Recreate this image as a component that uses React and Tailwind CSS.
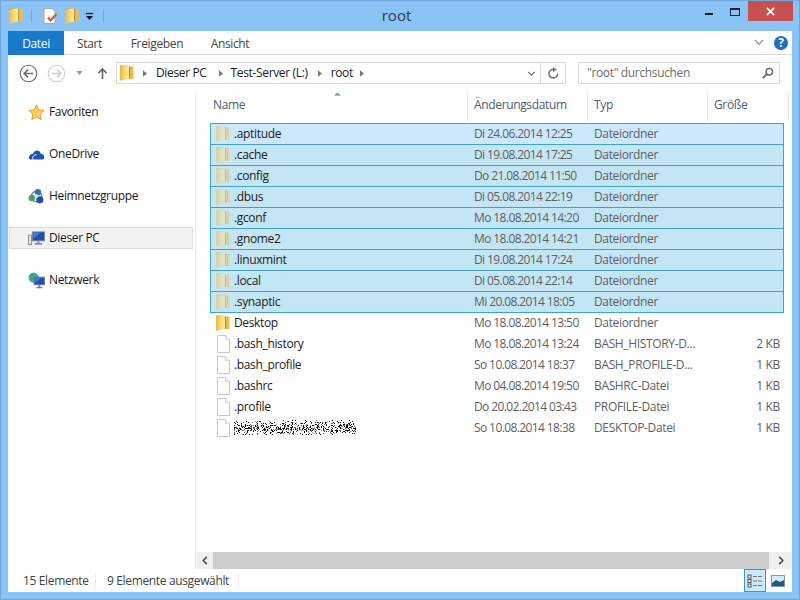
import React from "react";

const FONT = "font-['Open_Sans','Noto_Sans',sans-serif]";

function Folder({ faded = false, className = "" }) {
  return (
    <svg viewBox="0 0 16 16" className={`w-4 h-4 shrink-0 ${faded ? "opacity-45" : ""} ${className}`}>
      <defs>
        <linearGradient id="fg" x1="0" y1="0" x2="1" y2="0">
          <stop offset="0" stopColor="#eab93f" />
          <stop offset="0.5" stopColor="#f7d873" />
          <stop offset="1" stopColor="#fcecac" />
        </linearGradient>
        <linearGradient id="fb" x1="0" y1="0" x2="1" y2="0">
          <stop offset="0" stopColor="#d99f28" />
          <stop offset="1" stopColor="#efc04c" />
        </linearGradient>
      </defs>
      <path d="M1 0.5 H8 L10 1.5 H14.5 V14 H7 L1 15.5 Z" fill="url(#fb)" />
      <path d="M1 1.5 L10 0.5 V13.5 L1 15.5 Z" fill="url(#fg)" />
      <path d="M10 0.5 V13.5 L11 13 V1.5 Z" fill="#c18b25" />
    </svg>
  );
}

function PageIcon() {
  return (
    <svg viewBox="0 0 16 18" className="w-4 h-[18px] shrink-0">
      <path d="M2.5 0.5 H10.5 L14.5 4.5 V17.5 H2.5 Z" fill="#fff" stroke="#c8c8c8" />
      <path d="M10.5 0.5 V4.5 H14.5" fill="#f3f3f3" stroke="#d6d6d6" />
    </svg>
  );
}

function Noise() {
  const dots = [];
  let s = 12345;
  const r = () => {
    s = (s * 1103515245 + 12345) & 0x7fffffff;
    return s / 0x7fffffff;
  };
  for (let y = 0; y < 15; y++) {
    for (let x = 0; x < 122; x++) {
      const edge = Math.abs(y - 7.5) / 7.5;
      if (r() < 0.5 - edge * 0.4) {
        const v = r();
        const c = v < 0.6 ? "#111" : v < 0.85 ? "#666" : "#aaa";
        dots.push(<rect key={`${x}-${y}`} x={x} y={y} width="1" height="1" fill={c} />);
      }
    }
  }
  return (
    <svg viewBox="0 0 122 15" className="w-[122px] h-[15px] block">
      {dots}
    </svg>
  );
}

const selected = [
  [".aptitude", "Di 24.06.2014 12:25"],
  [".cache", "Di 19.08.2014 17:25"],
  [".config", "Do 21.08.2014 11:50"],
  [".dbus", "Di 05.08.2014 22:19"],
  [".gconf", "Mo 18.08.2014 14:20"],
  [".gnome2", "Mo 18.08.2014 14:21"],
  [".linuxmint", "Di 19.08.2014 17:24"],
  [".local", "Di 05.08.2014 22:14"],
  [".synaptic", "Mi 20.08.2014 18:05"],
];

const files = [
  [".bash_history", "Mo 18.08.2014 13:24", "BASH_HISTORY-D...", "2 KB"],
  [".bash_profile", "So 10.08.2014 18:37", "BASH_PROFILE-D...", "1 KB"],
  [".bashrc", "Mo 04.08.2014 19:50", "BASHRC-Datei", "1 KB"],
  [".profile", "Do 20.02.2014 03:43", "PROFILE-Datei", "1 KB"],
  [null, "So 10.08.2014 18:38", "DESKTOP-Datei", "1 KB"],
];

function Cells({ icon, name, date, type, size }) {
  return (
    <>
      <div className="w-[23px] flex justify-center items-center shrink-0">{icon}</div>
      <div className="w-[240px] truncate text-[#1a1a1a] shrink-0">{name}</div>
      <div className="w-[120px] text-[#5f5f5f] shrink-0 tracking-[-0.6px] whitespace-nowrap">{date}</div>
      <div className="w-[122px] text-[#5f5f5f] shrink-0 whitespace-nowrap">{type}</div>
      <div className="w-[64px] text-right text-[#5f5f5f] shrink-0">{size}</div>
    </>
  );
}

function NavItem({ icon, label, active = false }) {
  return (
    <div
      className={`h-[22px] ml-px mr-[2px] flex items-center pl-[18px] border ${
        active ? "bg-[#f2f2f2] border-[#dcdcdc]" : "border-transparent"
      }`}
    >
      <div className="w-[21px] flex items-center shrink-0">{icon}</div>
      <span className="text-[#1a1a1a]">{label}</span>
    </div>
  );
}

const Star = (
  <svg viewBox="0 0 18 18" className="w-[17px] h-[17px]">
    <path d="M9 1 L11.4 6.2 L17 6.9 L12.9 10.7 L14 16.4 L9 13.6 L4 16.4 L5.1 10.7 L1 6.9 L6.6 6.2 Z" fill="#fbcf5e" stroke="#e09a2c" />
  </svg>
);
const Cloud = (
  <svg viewBox="0 0 18 12" className="w-[17px] h-[11px]">
    <path d="M3 11.5 C0.5 11.5 0 9 1.5 7.6 C2 5.6 3.8 5 5 5.6 C6 2 9.5 0.5 12 2.5 C13 3.2 13.4 4.2 13.4 5.2 C16 5.2 17.6 7 17.6 9 C17.6 10.6 16.6 11.5 15 11.5 Z" fill="#1b58ab" />
    <path d="M5 11.5 C4.2 8 6.5 6 9 6.2" stroke="#fff" strokeWidth="1" fill="none" />
  </svg>
);
const Home = (
  <svg viewBox="0 0 18 18" className="w-[17px] h-[17px]">
    <circle cx="9" cy="9" r="5.5" fill="none" stroke="#5d86b8" strokeWidth="1.5" />
    <circle cx="10.5" cy="4.5" r="3.4" fill="#2f6fc0" />
    <circle cx="4" cy="10.5" r="3.4" fill="#4fa24a" />
    <circle cx="12.5" cy="12.5" r="3.8" fill="#1d4fa8" />
    <circle cx="9" cy="8.5" r="2" fill="#cfe3f5" />
  </svg>
);
const Pc = (
  <svg viewBox="0 0 18 16" className="w-[17px] h-[15px]">
    <rect x="0.5" y="4.5" width="3" height="10" fill="#e6e6e6" stroke="#8a8a8a" />
    <rect x="4.5" y="1" width="13" height="9.5" fill="#1c4fb0" stroke="#7b8794" />
    <path d="M5.5 2 H13 L5.5 8 Z" fill="#3f83d8" />
    <rect x="9.5" y="10.5" width="3" height="2.5" fill="#9aa5ad" />
    <rect x="7" y="13" width="8" height="1.5" fill="#6f7a82" />
  </svg>
);
const Net = (
  <svg viewBox="0 0 18 18" className="w-[17px] h-[17px]">
    <circle cx="6" cy="6" r="5.5" fill="#3fa4dc" />
    <path d="M2 3.5 L6 2 L8 5 L5 9 L2.5 7 Z" fill="#48a645" />
    <rect x="6.5" y="5.5" width="11" height="8" fill="#1c4fb0" stroke="#71808d" />
    <path d="M7.5 6.5 H14 L7.5 11 Z" fill="#3f83d8" />
    <rect x="11" y="13.5" width="2" height="2.5" fill="#7a8690" />
    <rect x="9" y="16" width="6" height="1.2" fill="#5d6a74" />
  </svg>
);

function Divider({ className = "" }) {
  return <div className={`w-px h-[14px] bg-[#5f9bd0] opacity-60 ${className}`} />;
}

function Crumb({ className }) {
  return (
    <svg viewBox="0 0 5 8" className={`w-[4px] h-[7px] fill-[#777] shrink-0 ${className}`}>
      <path d="M0 0 L5 4 L0 8 Z" />
    </svg>
  );
}

export default function App() {
  return (
    <div className={`w-[800px] h-[600px] bg-[#8bc3f6] border border-[#6ea7de] flex flex-col overflow-hidden text-[12px] tracking-[-0.35px] ${FONT}`}>
      {/* Title bar */}
      <div className="h-[30px] shrink-0 flex items-start relative">
        <div className="flex items-center pl-[7px] pt-[6px] h-[24px]">
          <Folder />
          <Divider className="ml-[7px]" />
          <svg viewBox="0 0 16 16" className="w-4 h-4 ml-[10px]">
            <path d="M2 0.5 H10 L13 3.5 V15.5 H2 Z" fill="#fff" stroke="#a8a8a8" />
            <path d="M6 9.5 L8.5 12.5 L14.5 6" fill="none" stroke="#e0562f" strokeWidth="2.2" />
          </svg>
          <Folder className="ml-[6px]" />
          <svg viewBox="0 0 10 10" className="w-[9px] h-[9px] ml-[5px]">
            <rect x="1" y="1" width="8" height="1.4" fill="#111" />
            <path d="M1 4.5 H9 L5 9 Z" fill="#111" />
          </svg>
          <Divider className="ml-[9px]" />
        </div>
        <div className="absolute left-0 right-[7px] top-[3px] text-center text-[15px] tracking-normal leading-[22px] text-[#2c3a4b]">root</div>
        <div className="ml-auto flex items-start mr-[6px]">
          <div className="w-[27px] h-[20px] flex justify-center">
            <div className="w-[8px] h-[2px] bg-[#10233a] mt-[12px]" />
          </div>
          <div className="w-[26px] h-[20px] flex justify-center">
            <div className="w-[10px] h-[8px] border border-t-2 border-[#10233a] mt-[7px]" />
          </div>
          <div className="w-[45px] h-[20px] bg-[#c75050] flex items-center justify-center">
            <svg viewBox="0 0 10 10" className="w-[9px] h-[9px]">
              <path d="M1 1 L9 9 M9 1 L1 9" stroke="#fff" strokeWidth="1.8" />
            </svg>
          </div>
        </div>
      </div>

      <div className="flex-1 mx-[7px] mb-[7px] bg-white flex flex-col min-h-0">
        {/* Tabs */}
        <div className="h-[24px] shrink-0 flex items-stretch border-b border-[#dadbdc] relative">
          <div className="w-[56px] -mb-px pt-[2px] bg-[#1979ca] text-white flex items-center justify-center">Datei</div>
          <div className="w-[51px] pt-[2px] flex items-center justify-center text-[#444]">Start</div>
          <div className="w-[84px] pt-[2px] flex items-center justify-center text-[#444]">Freigeben</div>
          <div className="w-[62px] pt-[2px] flex items-center justify-center text-[#444]">Ansicht</div>
          <div className="ml-auto flex items-center pr-[4px] gap-[10px]">
            <svg viewBox="0 0 12 8" className="w-[10px] h-[7px]">
              <path d="M1 1 L6 6 L11 1" fill="none" stroke="#9a9a9a" strokeWidth="1.8" />
            </svg>
            <div className="w-[14px] h-[14px] rounded-full bg-[#1a6fc0] text-white font-bold text-[12px] leading-[14px] text-center">?</div>
          </div>
        </div>

        {/* Address row */}
        <div className="h-[37px] shrink-0 flex items-start pt-[7px]">
          <div className="flex items-center w-[108px] h-[22px] shrink-0">
            <svg viewBox="0 0 20 20" className="w-[19px] h-[19px] ml-[11px]">
              <circle cx="10" cy="10" r="8.7" fill="#fff" stroke="#6f6f6f" strokeWidth="1.2" />
              <path d="M15 10 H6 M9.5 6 L5.5 10 L9.5 14" fill="none" stroke="#6f6f6f" strokeWidth="1.8" />
            </svg>
            <svg viewBox="0 0 20 20" className="w-[19px] h-[19px] ml-[9px]">
              <circle cx="10" cy="10" r="8.7" fill="#fff" stroke="#d0d0d0" strokeWidth="1.2" />
              <path d="M5 10 H14 M10.5 6 L14.5 10 L10.5 14" fill="none" stroke="#d0d0d0" strokeWidth="1.8" />
            </svg>
            <svg viewBox="0 0 8 5" className="w-[7px] h-[4px] ml-[10px]">
              <path d="M0 0 H8 L4 5 Z" fill="#9a9a9a" />
            </svg>
            <svg viewBox="0 0 12 14" className="w-[11px] h-[13px] ml-[14px]">
              <path d="M6 13 V2 M1.5 6.5 L6 2 L10.5 6.5" fill="none" stroke="#6a6a6a" strokeWidth="1.8" />
            </svg>
          </div>
          <div className="w-[450px] h-[22px] shrink-0 border border-[#d9d9d9] flex items-center text-[#1a1a1a]">
            <Folder className="ml-[2px]" />
            <Crumb className="ml-[8px]" />
            <span className="ml-[9px] whitespace-nowrap">Dieser PC</span>
            <Crumb className="ml-[12px]" />
            <span className="ml-[8px] whitespace-nowrap">Test-Server (L:)</span>
            <Crumb className="ml-[10px]" />
            <span className="ml-[9px]">root</span>
            <Crumb className="ml-[7px]" />
            <div className="ml-auto flex items-center h-full">
              <svg viewBox="0 0 10 6" className="w-[9px] h-[5px] mr-[4px]">
                <path d="M1 1 L5 5 L9 1" fill="none" stroke="#777" strokeWidth="1.5" />
              </svg>
              <div className="w-[25px] h-full border-l border-[#d9d9d9] flex items-center justify-center">
                <svg viewBox="0 0 14 14" className="w-[13px] h-[13px]">
                  <path d="M11.5 7 A4.7 4.7 0 1 1 8 2.5" fill="none" stroke="#6f6f6f" strokeWidth="1.6" />
                  <path d="M6.5 0 L10.5 2.8 L6.5 5.5 Z" fill="#6f6f6f" />
                </svg>
              </div>
            </div>
          </div>
          <div className="w-[202px] h-[22px] ml-[12px] shrink-0 border border-[#d9d9d9] flex items-center pl-[8px] pr-[4px] text-[#6d6d6d]">
            <span>"root" durchsuchen</span>
            <svg viewBox="0 0 14 14" className="w-[12px] h-[12px] ml-auto mr-[1px]">
              <circle cx="8.5" cy="5.5" r="3.8" fill="none" stroke="#6d6d6d" strokeWidth="1.8" />
              <path d="M5.5 8.5 L1 13" stroke="#6d6d6d" strokeWidth="2.2" />
            </svg>
          </div>
        </div>

        {/* Main */}
        <div className="flex-1 flex min-h-0">
          <div className="w-[188px] shrink-0 border-r border-[#e9e9e9] flex flex-col gap-[20px] pt-[9px]">
            <NavItem icon={Star} label="Favoriten" />
            <NavItem icon={Cloud} label="OneDrive" />
            <NavItem icon={Home} label="Heimnetzgruppe" />
            <NavItem icon={Pc} label="Dieser PC" active />
            <NavItem icon={Net} label="Netzwerk" />
          </div>
          <div className="flex-1 flex flex-col min-w-0">
            <div className="flex-1 min-h-0">
              {/* Header */}
              <div className="h-[30px] flex text-[#4c5c6e] relative">
                <div className="w-[272px] pl-[17px] pb-[4px] flex items-center border-r border-[#e6e6e6]">Name</div>
                <div className="w-[120px] pl-[6px] pb-[4px] flex items-center border-r border-[#e6e6e6]">Änderungsdatum</div>
                <div className="w-[120px] pl-[6px] pb-[4px] flex items-center border-r border-[#e6e6e6]">Typ</div>
                <div className="w-[81px] pl-[6px] pb-[4px] flex items-center border-r border-[#e6e6e6]">Größe</div>
                <svg viewBox="0 0 8 4" className="absolute left-[138px] top-0 w-[7px] h-[4px]">
                  <path d="M0 4 L4 0 L8 4 Z" fill="#7ea6c4" />
                </svg>
              </div>
              {/* Rows */}
              <div className="ml-[14px] w-[574px] mt-[1px]">
                <div className="border-b border-[#3ea2c9]">
                  {selected.map(([n, d], i) => (
                    <div
                      key={n}
                      className={`h-[21px] flex items-center border-x border-t border-[#3ea2c9] ${
                        i === 0 ? "bg-[#cde8fc]" : "bg-[#c4e5f3]"
                      }`}
                    >
                      <Cells icon={<Folder faded />} name={n} date={d} type="Dateiordner" />
                    </div>
                  ))}
                </div>
                <div className="-mt-px">
                  <div className="h-[21px] flex items-center border border-transparent">
                    <Cells icon={<Folder />} name="Desktop" date="Mo 18.08.2014 13:50" type="Dateiordner" />
                  </div>
                  {files.map(([n, d, t, s]) => (
                    <div key={d} className="h-[21px] flex items-center border-x border-transparent">
                      <Cells icon={<PageIcon />} name={n === null ? <Noise /> : n} date={d} type={t} size={s} />
                    </div>
                  ))}
                </div>
              </div>
            </div>
            {/* Horizontal scrollbar */}
            <div className="h-[17px] shrink-0 bg-[#f0f0f0] flex items-stretch">
              <div className="w-[17px] flex items-center justify-center">
                <svg viewBox="0 0 6 10" className="w-[6px] h-[9px]"><path d="M5 1 L1 5 L5 9" fill="none" stroke="#505050" strokeWidth="1.8" /></svg>
              </div>
              <div className="flex-1 bg-[#cdcdcd]" />
              <div className="w-[23px] flex items-center justify-center">
                <svg viewBox="0 0 6 10" className="w-[6px] h-[9px]"><path d="M1 1 L5 5 L1 9" fill="none" stroke="#505050" strokeWidth="1.8" /></svg>
              </div>
            </div>
          </div>
        </div>

        {/* Status bar */}
        <div className="h-[23px] shrink-0 flex items-center text-[#3f3f3f] pl-[15px]">
          <span className="w-[73px] h-[14px] leading-[14px] border-r border-[#ececec] whitespace-nowrap">15 Elemente</span>
          <span className="w-[131px] pl-[11px] box-content h-[14px] leading-[14px] border-r border-[#ececec] whitespace-nowrap">9 Elemente ausgewählt</span>
          <div className="ml-auto flex items-center h-full pr-[7px]">
            <div className="w-[22px] h-full bg-[#cce8ff] border border-[#3a9ab5] flex items-center justify-center">
              <svg viewBox="0 0 16 14" className="w-[16px] h-[14px]">
                <g fill="#fff" stroke="#555">
                  <rect x="1" y="1" width="3" height="3" />
                  <rect x="1" y="5.5" width="3" height="3" />
                  <rect x="1" y="10" width="3" height="3" />
                </g>
                <path d="M6 2.5 H15 M6 7 H15 M6 11.5 H15" stroke="#777" strokeWidth="1" strokeDasharray="4 1" />
              </svg>
            </div>
            <div className="ml-[5px]">
              <svg viewBox="0 0 14 12" className="w-[14px] h-[12px] block">
                <rect x="0.5" y="0.5" width="13" height="11" fill="#d6e9f7" stroke="#8a97a3" />
                <path d="M1 8 L5 5 L9 7 L13 5 V11 H1 Z" fill="#1c5a88" />
              </svg>
            </div>
          </div>
        </div>
      </div>
    </div>
  );
}
